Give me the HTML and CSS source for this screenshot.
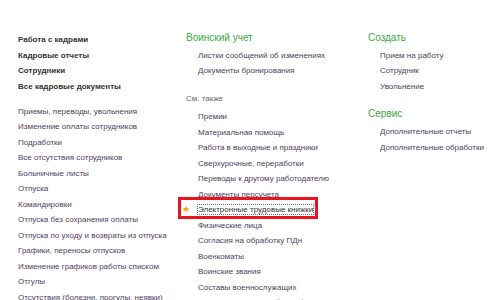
FILE: index.html
```html
<!DOCTYPE html>
<html lang="ru">
<head>
  <meta charset="UTF-8">
  <title>Кадры</title>
  <link rel="stylesheet" href="styles.css">
</head>
<body>
<div class="panel">
  <!-- Левая колонка -->
  <div class="col col-left">
    <ul class="links main-links">
      <li>Работа с кадрами</li>
      <li>Кадровые отчеты</li>
      <li>Сотрудники</li>
      <li>Все кадровые документы</li>
    </ul>
    <ul class="links docs">
      <li>Приемы, переводы, увольнения</li>
      <li>Изменение оплаты сотрудников</li>
      <li>Подработки</li>
      <li>Все отсутствия сотрудников</li>
      <li>Больничные листы</li>
      <li>Отпуска</li>
      <li>Командировки</li>
      <li>Отпуска без сохранения оплаты</li>
      <li>Отпуска по уходу и возвраты из отпуска</li>
      <li>Графики, переносы отпусков</li>
      <li>Изменение графиков работы списком</li>
      <li>Отгулы</li>
      <li>Отсутствия (болезни, прогулы, неявки)</li>
    </ul>
  </div>

  <!-- Средняя колонка -->
  <div class="col">
    <h3 class="group-title">Воинский учет</h3>
    <ul class="links sub">
      <li>Листки сообщений об изменениях</li>
      <li>Документы бронирования</li>
    </ul>
    <div class="see-also">См. также</div>
    <ul class="links sub see-list">
      <li>Премии</li>
      <li>Материальная помощь</li>
      <li>Работа в выходные и праздники</li>
      <li>Сверхурочные, переработки</li>
      <li>Переводы к другому работодателю</li>
      <li>Документы персучета</li>
      <li class="marked"><span class="star">★</span><span class="focus">Электронные трудовые книжки</span><span class="highlight"></span></li>
      <li>Физические лица</li>
      <li>Согласия на обработку ПДн</li>
      <li>Военкоматы</li>
      <li>Воинские звания</li>
      <li>Составы военнослужащих</li>
      <li>Перечень должностей для бронирования</li>
    </ul>
  </div>

  <!-- Правая колонка -->
  <div class="col">
    <h3 class="group-title">Создать</h3>
    <ul class="links sub">
      <li>Прием на работу</li>
      <li>Сотрудник</li>
      <li>Увольнение</li>
    </ul>
    <h3 class="group-title service">Сервис</h3>
    <ul class="links sub">
      <li>Дополнительные отчеты</li>
      <li>Дополнительные обработки</li>
    </ul>
  </div>
</div>
</body>
</html>
```

FILE: styles.css
```css
body {
  margin: 0;
  background: #fff;
  font-family: "Liberation Sans", Arial, sans-serif;
  font-size: 8px;
  color: #4d4160;
  overflow: hidden;
}
.panel {
  display: grid;
  grid-template-columns: 168px 182px 1fr;
  align-items: start;
  padding: 27.5px 0 0 18px;
}
.col-left {
  padding-top: 4.5px;
}
.links {
  list-style: none;
  margin: 0;
  padding: 0;
}
.links li {
  line-height: 15.5px;
  white-space: nowrap;
}
.main-links li {
  color: #333;
  font-weight: bold;
}
.docs {
  margin-top: 9.5px;
}
.group-title {
  margin: 0;
  font-size: 10px;
  font-weight: normal;
  line-height: 20px;
  color: #3aa843;
}
.group-title.service {
  margin-top: 10px;
}
.sub {
  padding-left: 12px;
}
.see-also {
  margin-top: 11.5px;
  line-height: 18px;
  color: #666;
}
.see-list {
  margin-top: 1px;
}
.marked {
  position: relative;
}
.star {
  position: absolute;
  left: -16px;
  top: 0;
  color: #f2a900;
  font-size: 9px;
}
.focus {
  outline: 1px dotted #777;
  outline-offset: 0;
  color: #333;
}
.highlight {
  position: absolute;
  left: -20px;
  top: -5px;
  width: 134px;
  height: 16px;
  border: 3px solid #e8141e;
}
```
